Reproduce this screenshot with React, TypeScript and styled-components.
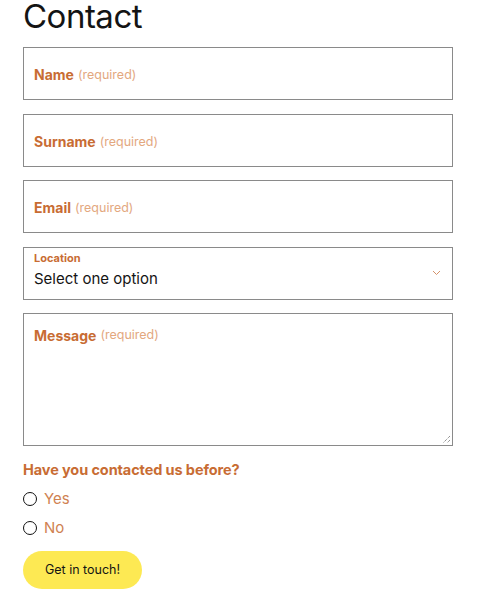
import React, { useState } from 'react'
import styled, { createGlobalStyle } from 'styled-components'

const GlobalStyle = createGlobalStyle`
  html, body {
    margin: 0;
    padding: 0;
    background: #ffffff;
  }
  body {
    font-family: Inter, "Noto Sans", "Liberation Sans", sans-serif;
  }
`

const colors = {
  orange: '#c86c33',
  orangeLight: '#e3a87f',
  border: '#8a8a8a',
  text: '#141414',
  yellow: '#fde953',
}

const Page = styled.div`
  padding: 0 28px 0 23px;
  width: 430px;
`

const Title = styled.h1`
  margin: 0 0 15px;
  font-size: 33px;
  line-height: 32px;
  font-weight: 400;
  color: ${colors.text};
  letter-spacing: -0.5px;
`

const Form = styled.form`
  display: flex;
  flex-direction: column;
  gap: 13.5px;
`

const FieldBox = styled.label<{ $tall?: boolean }>`
  position: relative;
  display: flex;
  align-items: ${(p) => (p.$tall ? 'flex-start' : 'center')};
  box-sizing: border-box;
  height: ${(p) => (p.$tall ? '133px' : '53px')};
  border: 1px solid ${colors.border};
  padding: ${(p) => (p.$tall ? '13px 10px' : '2px 10px 0')};
`

const Label = styled.span`
  font-size: 14px;
  font-weight: 700;
  color: ${colors.orange};
`

const Required = styled.span`
  font-size: 12.5px;
  font-weight: 400;
  color: ${colors.orangeLight};
  margin-left: 4px;
`

const SelectBox = styled.div`
  position: relative;
  box-sizing: border-box;
  height: 53px;
  border: 1px solid ${colors.border};
  padding: 3px 10px 0;
  display: flex;
  flex-direction: column;
`

const SmallLabel = styled.span`
  font-size: 11px;
  font-weight: 700;
  color: ${colors.orange};
  line-height: 14px;
`

const SelectValue = styled.span`
  font-size: 15px;
  color: ${colors.text};
  line-height: 22px;
  margin-top: 3px;
`

const Chevron = styled.svg`
  position: absolute;
  right: 11px;
  top: 22px;
`

const ResizeHandle = styled.svg`
  position: absolute;
  right: 1px;
  bottom: 1px;
`

const Question = styled.div`
  font-size: 14.5px;
  font-weight: 700;
  color: ${colors.orange};
  line-height: 20px;
  letter-spacing: -0.1px;
`

const Options = styled.div`
  display: flex;
  flex-direction: column;
  gap: 7px;
  margin-top: -5.5px;
`

const Option = styled.label`
  display: flex;
  align-items: center;
  gap: 7px;
  height: 22px;
  cursor: pointer;
`

const RadioCircle = styled.span<{ $checked: boolean }>`
  box-sizing: border-box;
  width: 14px;
  height: 14px;
  border-radius: 50%;
  border: 1.5px solid #111;
  display: flex;
  align-items: center;
  justify-content: center;
  &::after {
    content: '';
    width: 6px;
    height: 6px;
    border-radius: 50%;
    background: ${(p) => (p.$checked ? '#111' : 'transparent')};
  }
`

const OptionText = styled.span`
  font-size: 15px;
  color: ${colors.orange};
  opacity: 0.85;
`

const SubmitButton = styled.button`
  align-self: flex-start;
  margin-top: -1.5px;
  width: 119px;
  height: 38px;
  border: none;
  border-radius: 19px;
  background: ${colors.yellow};
  font-family: inherit;
  font-size: 12.5px;
  color: ${colors.text};
  cursor: pointer;
`

const App: React.FC = () => {
  const [contacted, setContacted] = useState<string | null>(null)

  return (
    <>
      <GlobalStyle />
      <Page>
        <Title>Contact</Title>
        <Form onSubmit={(e) => e.preventDefault()}>
          <FieldBox>
            <Label>Name</Label>
            <Required>(required)</Required>
          </FieldBox>
          <FieldBox>
            <Label>Surname</Label>
            <Required>(required)</Required>
          </FieldBox>
          <FieldBox>
            <Label>Email</Label>
            <Required>(required)</Required>
          </FieldBox>
          <SelectBox>
            <SmallLabel>Location</SmallLabel>
            <SelectValue>Select one option</SelectValue>
            <Chevron width="9" height="6" viewBox="0 0 9 6">
              <path d="M1 1l3.5 3.5L8 1" fill="none" stroke="#d4926a" strokeWidth="1" />
            </Chevron>
          </SelectBox>
          <FieldBox $tall>
            <Label>Message</Label>
            <Required>(required)</Required>
            <ResizeHandle width="9" height="9" viewBox="0 0 9 9">
              <path d="M8 1L1 8M8 5L5 8" stroke="#666" strokeWidth="1" strokeDasharray="1 1" />
            </ResizeHandle>
          </FieldBox>
          <Question>Have you contacted us before?</Question>
          <Options>
            {['Yes', 'No'].map((o) => (
              <Option key={o} onClick={() => setContacted(o)}>
                <RadioCircle $checked={contacted === o} />
                <OptionText>{o}</OptionText>
              </Option>
            ))}
          </Options>
          <SubmitButton type="submit">Get in touch!</SubmitButton>
        </Form>
      </Page>
    </>
  )
}

export default App
